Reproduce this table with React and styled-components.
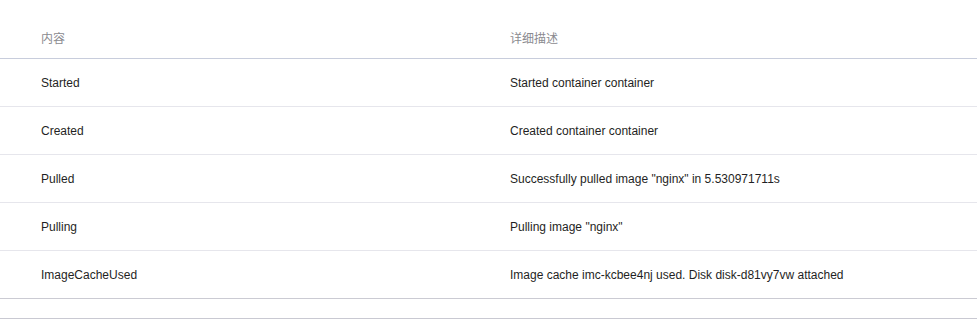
import React from "react";
import styled, { createGlobalStyle } from "styled-components";

const Global = createGlobalStyle`
  html, body { margin: 0; padding: 0; background: #fff; }
  body { font-family: "Liberation Sans", Arial, "Noto Sans CJK SC", sans-serif; }
`;

const Table = styled.div`
  width: 977px;
  display: flex;
  flex-direction: column;
`;

const Row = styled.div`
  display: grid;
  grid-template-columns: 469px 1fr;
  padding-left: 41px;
  box-sizing: border-box;
  height: ${(p) => (p.$head ? "59px" : "48px")};
  align-items: ${(p) => (p.$head ? "end" : "center")};
  padding-bottom: ${(p) => (p.$head ? "10px" : "0")};
  border-bottom: 1px solid ${(p) => p.$line};
`;

const Cell = styled.div`
  font-size: 12px;
  line-height: 18px;
  color: ${(p) => (p.$head ? "#8a8a8f" : "#1f1f24")};
  white-space: nowrap;
`;

const Footer = styled.div`
  box-sizing: border-box;
  height: 20px;
  border-bottom: 1px solid #c9c9d2;
`;

const rows = [
  ["Started", "Started container container"],
  ["Created", "Created container container"],
  ["Pulled", 'Successfully pulled image "nginx" in 5.530971711s'],
  ["Pulling", 'Pulling image "nginx"'],
  ["ImageCacheUsed", "Image cache imc-kcbee4nj used. Disk disk-d81vy7vw attached"],
];

export default function App() {
  return (
    <>
      <Global />
      <Table>
        <Row $head $line="#c8cddc">
          <Cell $head>内容</Cell>
          <Cell $head>详细描述</Cell>
        </Row>
        {rows.map(([a, b], i) => (
          <Row key={a} $line={i === rows.length - 1 ? "#cbcbd3" : "#e6e6ec"}>
            <Cell>{a}</Cell>
            <Cell>{b}</Cell>
          </Row>
        ))}
        <Footer />
      </Table>
    </>
  );
}
